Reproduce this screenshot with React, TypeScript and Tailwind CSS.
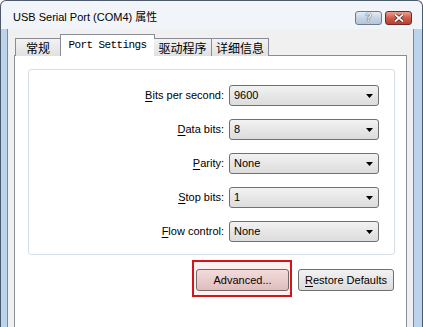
import React from "react";

const rows = [
  { key: "B", rest: "its per second:", value: "9600" },
  { key: "D", rest: "ata bits:", value: "8" },
  { key: "P", rest: "arity:", value: "None" },
  { key: "S", rest: "top bits:", value: "1" },
  { key: "F", rest: "low control:", value: "None" },
];

const Select = ({ value }: { value: string }) => (
  <div className="flex h-[21px] w-[150px] items-center justify-between rounded-[3px] border border-[#707070] bg-gradient-to-b from-[#f2f2f2] to-[#dcdcdc] pl-[4px] pr-[5px]">
    <span>{value}</span>
    <svg width="7" height="4" viewBox="0 0 7 4">
      <path d="M0 0H7L3.5 4Z" fill="#000" />
    </svg>
  </div>
);

const App = () => {
  return (
    <div
      className="relative h-[327px] w-[423px] overflow-hidden bg-white text-[11px] text-black"
      style={{ fontFamily: '"Liberation Sans", "Noto Sans CJK SC", sans-serif' }}
    >
      <div className="flex h-[327px] flex-col rounded-t-[6px] border border-b-0 border-[#4b5a6b] bg-gradient-to-b from-[#f2f5f9] to-[#e4ebf2]">
        {/* title bar */}
        <div className="flex h-[28px] items-center pl-[12px] pr-[10px] pt-[5px]">
          <span className="flex-1 text-[11px]">USB Serial Port (COM4) 属性</span>
          <div className="flex gap-[3px]">
            <div className="flex h-[14px] w-[27px] items-center justify-center rounded-[3px] border border-[#6d7b8d] bg-gradient-to-b from-[#e3ebf4] via-[#c6d4e4] to-[#b4c6da] text-[10px] font-bold leading-none text-[#f4f7fb] [text-shadow:0_0_1px_#34455a,0_0_1px_#34455a]">
              ?
            </div>
            <div className="flex h-[14px] w-[27px] items-center justify-center rounded-[3px] border border-[#6b2b2b] bg-gradient-to-b from-[#e8a090] via-[#cd5c4c] to-[#b8402e]">
              <svg width="10" height="8" viewBox="0 0 10 8">
                <path d="M1 0.5L9 7.5M9 0.5L1 7.5" stroke="#4a1a14" strokeWidth="3.2" />
                <path d="M1 0.5L9 7.5M9 0.5L1 7.5" stroke="#fff" strokeWidth="1.8" />
              </svg>
            </div>
          </div>
        </div>

        {/* body */}
        <div className="flex flex-1">
          <div className="w-[6px] bg-[#bcd3ec]" />
          <div className="flex flex-1 flex-col border-x border-[#7f8791] bg-[#f0f0f0] pl-[6px] pr-[6px] pt-[6px]">
            {/* tabs */}
            <div className="relative z-10 flex h-[21px] items-end pl-[1px] text-[12px]" style={{ fontFamily: '"Noto Sans CJK SC", sans-serif' }}>
              <div className="flex h-[18px] w-[46px] items-center justify-center border border-b-0 border-[#898c95] bg-gradient-to-b from-[#f2f2f2] to-[#e1e1e1]">
                常规
              </div>
              <div
                className="-mx-[1px] flex h-[22px] w-[95px] items-center justify-center border border-b-0 border-[#898c95] bg-white pb-[1px] text-[11px] tracking-[-0.6px]"
                style={{ fontFamily: '"Liberation Mono", monospace' }}
              >
                Port Settings
              </div>
              <div className="flex h-[18px] w-[58px] items-center justify-center border border-b-0 border-l-0 border-[#898c95] bg-gradient-to-b from-[#f2f2f2] to-[#e1e1e1]">
                驱动程序
              </div>
              <div className="flex h-[18px] w-[57px] items-center justify-center border border-b-0 border-l-0 border-[#898c95] bg-gradient-to-b from-[#f2f2f2] to-[#e1e1e1]">
                详细信息
              </div>
            </div>

            {/* tab page */}
            <div className="-mt-[1px] flex-1 border border-b-0 border-[#898c95] bg-white pl-[13px] pr-[11px] pt-[13px]">
              <div className="h-[186px] rounded-[3px] border border-[#d5dfe5] pt-[15px]">
                <div className="grid grid-cols-[195px_150px] items-center gap-x-[5px] gap-y-[13px]">
                  {rows.map((r) => (
                    <React.Fragment key={r.key}>
                      <div className="text-right">
                        <span className="underline underline-offset-[2px]">{r.key}</span>
                        {r.rest}
                      </div>
                      <Select value={r.value} />
                    </React.Fragment>
                  ))}
                </div>
              </div>

              <div className="mr-[1px] mt-[14px] flex justify-end gap-[9px]">
                <div className="relative">
                  <div className="flex h-[22px] w-[93px] items-center justify-center rounded-[3px] border border-[#707070] bg-gradient-to-b from-[#f3eaea] to-[#dcc9c9]">
                    Advanced...
                  </div>
                  <div className="absolute -bottom-[6px] -left-[4px] -right-[3px] -top-[9px] border-2 border-[#d0151c] bg-[#ff0000]/[0.06]" />
                </div>
                <div className="flex h-[22px] w-[96px] items-center justify-center rounded-[3px] border border-[#707070] bg-gradient-to-b from-[#f2f2f2] to-[#dcdcdc]">
                  <span>
                    <span className="underline underline-offset-[2px]">R</span>estore Defaults
                  </span>
                </div>
              </div>
            </div>
          </div>
          <div className="w-[8px] bg-[#bcd3ec]" />
        </div>
      </div>
    </div>
  );
};

export default App;
